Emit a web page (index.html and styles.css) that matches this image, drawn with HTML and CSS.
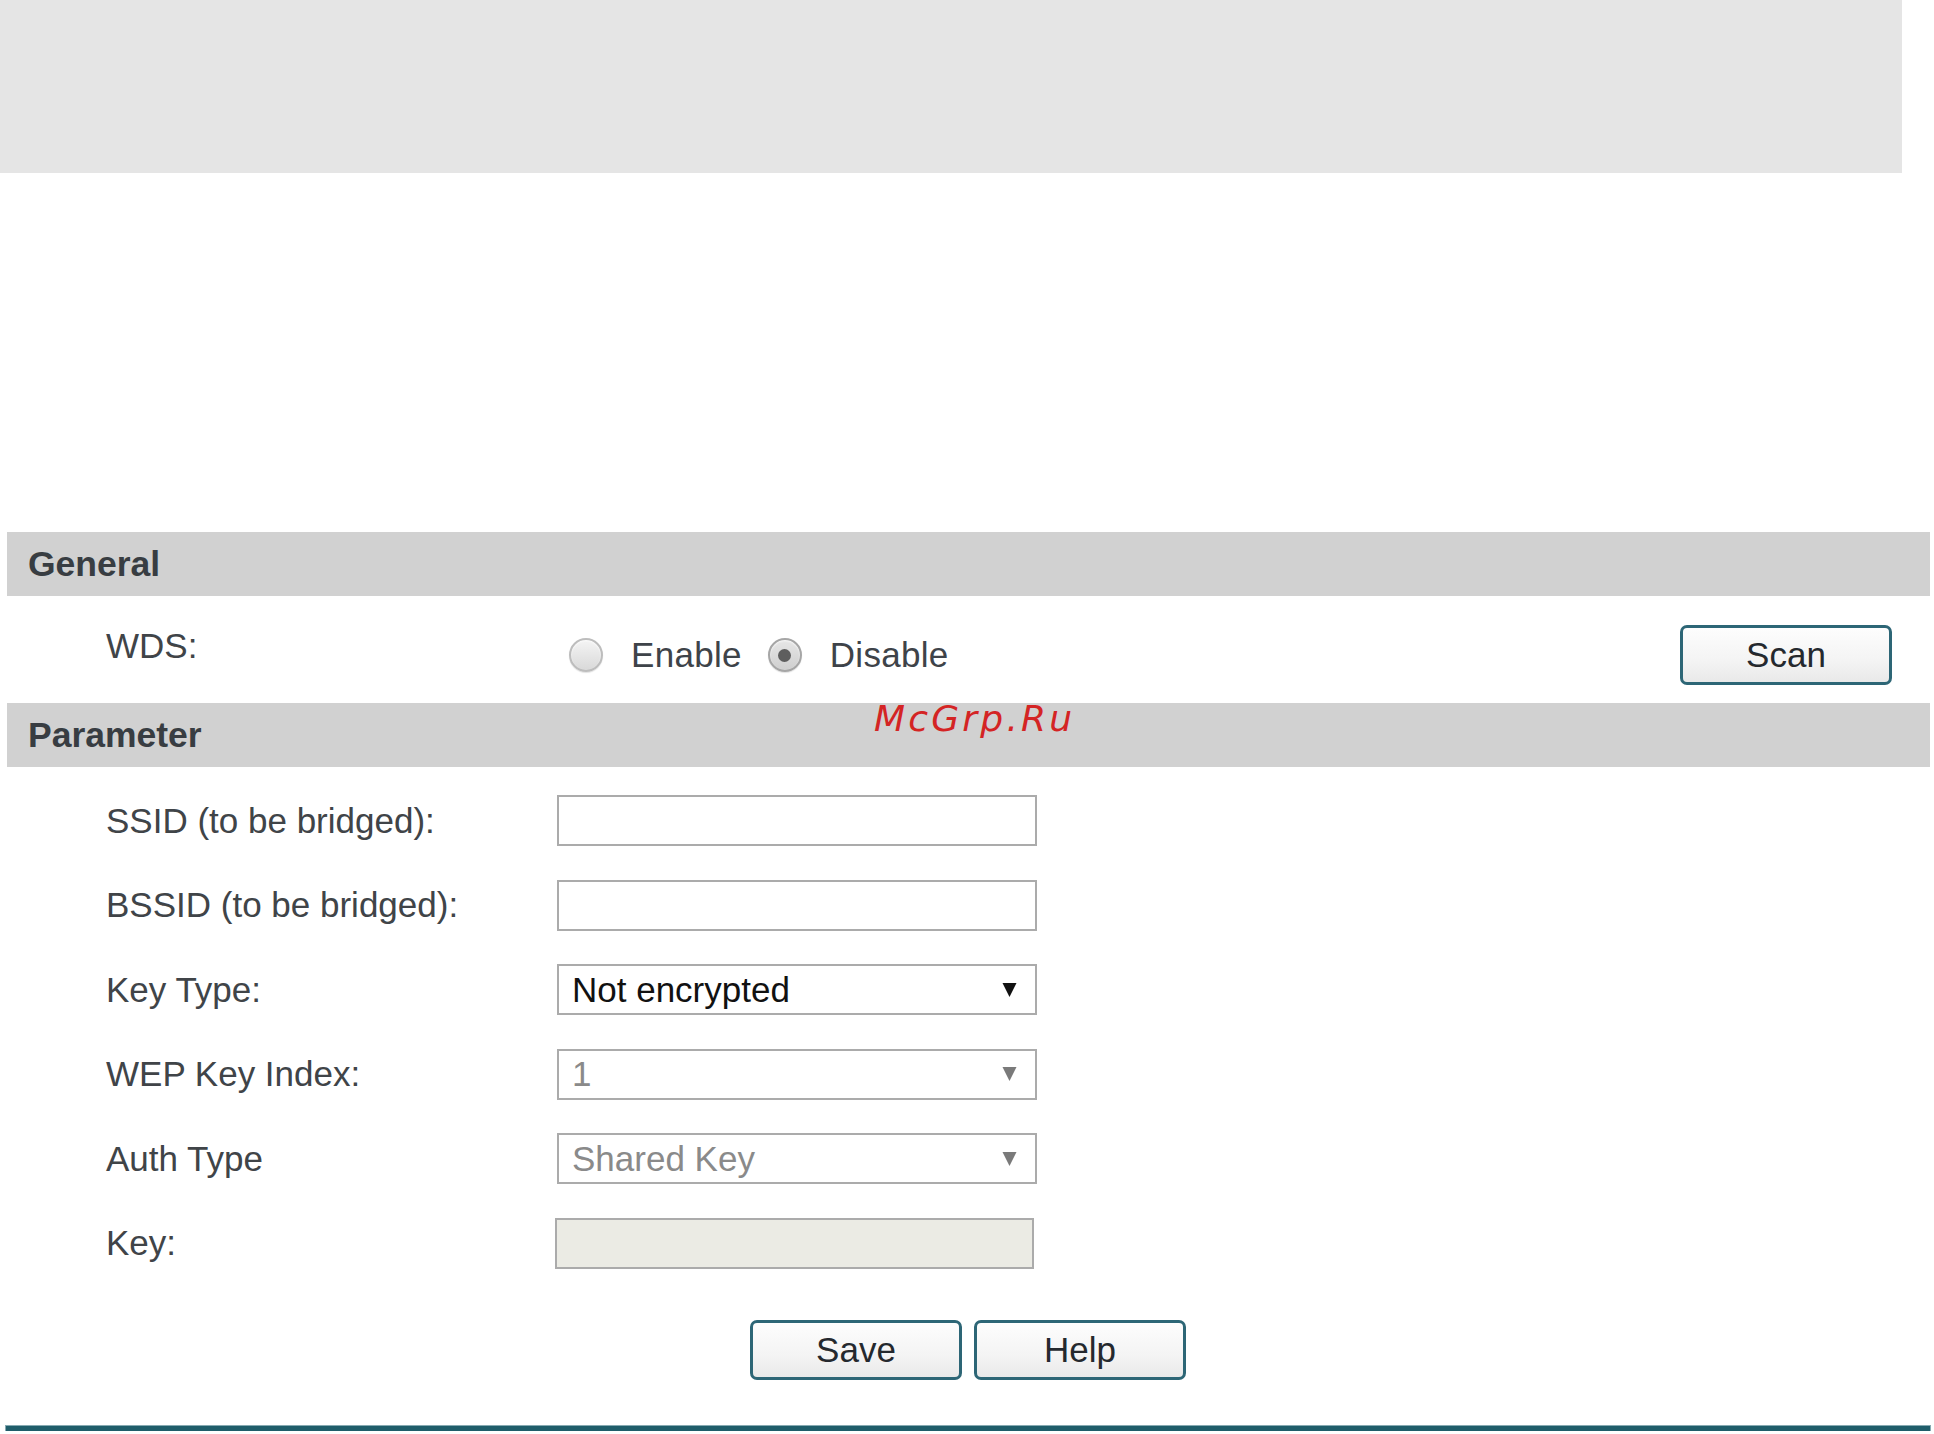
FILE: index.html
```html
<!DOCTYPE html>
<html lang="en">
<head>
<meta charset="utf-8">
<title>WDS Settings</title>
<link rel="stylesheet" href="styles.css">
</head>
<body>
<div class="top-band"></div>
<div class="content">
  <div class="section-head">General</div>
  <div class="wds-row">
    <div class="wds-label">WDS:</div>
    <div class="radio-group">
      <span class="radio"></span><span class="radio-text">Enable</span>
      <span class="radio checked"></span><span class="radio-text">Disable</span>
    </div>
    <button class="btn btn-scan" type="button">Scan</button>
  </div>
  <div class="section-head">Parameter</div>
  <div class="form-grid">
    <div class="label">SSID (to be bridged):</div>
    <div class="field"><div class="text-input"></div></div>

    <div class="label">BSSID (to be bridged):</div>
    <div class="field"><div class="text-input"></div></div>

    <div class="label">Key Type:</div>
    <div class="field">
      <div class="select">
        <span class="select-value">Not encrypted</span>
        <svg class="arrow" viewBox="0 0 15 16" width="15" height="16"><polygon points="0.5,1 14.5,1 7.5,15" fill="#111"/></svg>
      </div>
    </div>

    <div class="label">WEP Key Index:</div>
    <div class="field">
      <div class="select disabled">
        <span class="select-value">1</span>
        <svg class="arrow" viewBox="0 0 15 16" width="15" height="16"><polygon points="0.5,1 14.5,1 7.5,15" fill="#7a7a7a"/></svg>
      </div>
    </div>

    <div class="label">Auth Type</div>
    <div class="field">
      <div class="select disabled">
        <span class="select-value">Shared Key</span>
        <svg class="arrow" viewBox="0 0 15 16" width="15" height="16"><polygon points="0.5,1 14.5,1 7.5,15" fill="#7a7a7a"/></svg>
      </div>
    </div>

    <div class="label">Key:</div>
    <div class="field"><div class="text-input key-input"></div></div>
  </div>
  <div class="actions">
    <button class="btn btn-action" type="button">Save</button>
    <button class="btn btn-action" type="button">Help</button>
  </div>
  <div class="footer-line"></div>
</div>
<div class="watermark">McGrp.Ru</div>
</body>
</html>
```
FILE: styles.css
```css
html, body {
  margin: 0;
  padding: 0;
  background: #ffffff;
}

body {
  width: 1934px;
  font-family: "Liberation Sans", Arial, sans-serif;
  font-size: 35px;
  color: #404448;
  position: relative;
}

.top-band {
  width: 1902px;
  height: 173px;
  background: #e5e5e5;
}

.content {
  margin-top: 359px;
  margin-left: 7px;
  width: 1923px;
}

.section-head {
  height: 64px;
  line-height: 64px;
  background: #d1d1d1;
  padding-left: 21px;
  font-weight: bold;
  font-size: 35.5px;
  color: #383d42;
}

.wds-row {
  height: 107px;
  display: flex;
  align-items: center;
  padding-left: 99px;
  padding-right: 38px;
}

.wds-label {
  width: 451px;
  margin-top: -8px;
  flex: none;
}

.radio-group {
  display: flex;
  align-items: center;
  margin-top: 11px;
  flex: 1;
}

.radio {
  box-sizing: border-box;
  width: 34px;
  height: 34px;
  border-radius: 50%;
  border: 2px solid #bdbdbd;
  background: linear-gradient(#f4f4f4, #d9d9d9);
  box-shadow: inset 0 1px 2px rgba(255,255,255,0.8), 0 1px 1px rgba(0,0,0,0.12);
  display: flex;
  align-items: center;
  justify-content: center;
  margin-left: 12px;
}

.radio.checked {
  margin-left: 26px;
  border-color: #a6a6a6;
  background: linear-gradient(#e6e6e6, #cfcfcf);
}

.radio.checked::after {
  content: "";
  width: 13px;
  height: 13px;
  border-radius: 50%;
  background: #5e5e5e;
}

.radio-text {
  margin-left: 28px;
  color: #3e4349;
  letter-spacing: 0.3px;
}

.btn {
  box-sizing: border-box;
  border: 3px solid #2d6676;
  border-radius: 7px;
  background: linear-gradient(#fdfdfd 0%, #f4f4f4 60%, #e9e9e9 100%);
  font-family: "Liberation Sans", Arial, sans-serif;
  font-size: 35px;
  color: #25292e;
  padding: 0;
  cursor: pointer;
}

.btn-scan {
  width: 212px;
  height: 60px;
  margin-top: 11px;
  flex: none;
}

.form-grid {
  display: grid;
  grid-template-columns: 451px 480px;
  grid-auto-rows: 51px;
  row-gap: 33.6px;
  padding-left: 99px;
  padding-top: 28px;
  align-items: center;
}

.label {
  color: #404448;
}

.field {
  height: 51px;
}

.text-input,
.select {
  box-sizing: border-box;
  width: 480px;
  height: 51px;
  border: 2px solid #ababab;
  background: #ffffff;
}

.key-input {
  width: 479px;
  margin-left: -2px;
  background: #ebebe4;
}

.select {
  display: flex;
  align-items: center;
  justify-content: space-between;
  padding-left: 13px;
  padding-right: 18px;
}

.select-value {
  color: #111111;
}

.select.disabled .select-value {
  color: #8a8a8a;
}

.arrow {
  display: block;
  margin-top: 0;
}

.actions {
  display: flex;
  gap: 12px;
  padding-left: 743px;
  margin-top: 51px;
}

.btn-action {
  width: 212px;
  height: 60px;
}

.footer-line {
  margin-top: 46px;
  margin-left: -1px;
  width: 1924px;
  height: 5px;
  background: #1f5d6a;
  box-shadow: 0 0 0 1px #86aab2;
}

.watermark {
  position: absolute;
  left: 874px;
  top: 701px;
  font-family: "DejaVu Sans", sans-serif;
  font-style: oblique;
  font-size: 36px;
  line-height: 36px;
  letter-spacing: 3.2px;
  color: #d42424;
}
```
